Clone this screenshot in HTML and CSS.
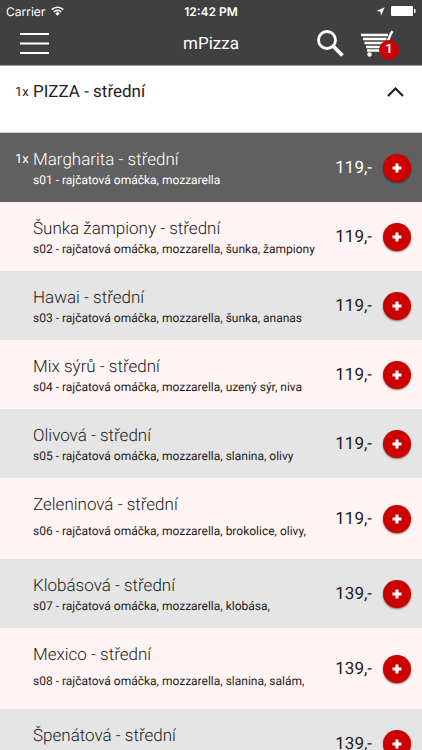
FILE: index.html
```html
<!DOCTYPE html>
<html lang="cs">
<head>
    <meta charset="UTF-8">
    <meta name="viewport" content="width=device-width, initial-scale=1.0">
    <title>mPizza</title>
    <link rel="stylesheet" href="styles.css">
</head>
<body>
    <header class="header">
        <div class="status-bar">
            <div class="carrier">
                <span>Carrier</span>
                <svg width="13" height="10" viewBox="0 0 13 10" fill="none" stroke="#fff" stroke-width="1.6">
                    <path d="M0.8 3.6a8.2 8.2 0 0 1 11.4 0M2.8 5.9a5.3 5.3 0 0 1 7.4 0"/>
                    <path d="M6.5 9.7L4.3 7.4a3.2 3.2 0 0 1 4.4 0z" fill="#fff" stroke="none"/>
                </svg>
            </div>
            <div class="time">12:42 PM</div>
            <div class="indicators">
                <svg width="9" height="9" viewBox="0 0 9 9"><path d="M8.7 0.3L5 8.7 4.4 4.6 0.3 4z" fill="#fff"/></svg>
                <svg width="25" height="10" viewBox="0 0 25 10" fill="#fff"><rect width="22" height="10" rx="1"/><path d="M23 3h1l.6 1v2L24 7h-1z"/></svg>
            </div>
        </div>
        <nav class="nav-bar">
            <button class="icon-btn menu-btn" type="button" aria-label="Menu">
                <svg width="29" height="23" viewBox="0 0 29 23" stroke="#fff" stroke-width="2"><path d="M0 2h29M0 11.500h29M0 21h29"/></svg>
            </button>
            <h1 class="title">mPizza</h1>
            <div class="nav-actions">
                <button class="icon-btn" type="button" aria-label="Hledat">
                    <svg width="27" height="27" viewBox="0 0 27 27" fill="none" stroke="#fff"><circle cx="10" cy="10" r="8.500" stroke-width="2.800"/><path d="M16 16l9.500 9.500" stroke-width="3.800"/></svg>
                </button>
                <button class="icon-btn cart-btn" type="button" aria-label="Košík">
                    <svg width="34" height="27" viewBox="0 0 34 27" fill="none" stroke="#fff">
                        <path d="M0 5h27M2 9h23.500M3.500 13h20.500M5 17h18" stroke-width="2.600"/>
                        <path d="M31.500 1.200L29.500 4.500 23 20.500H6" stroke-width="2.400"/>
                        <circle cx="8.500" cy="24.500" r="2.200" fill="#fff" stroke="none"/>
                    </svg>
                    <span class="badge">1</span>
                </button>
            </div>
        </nav>
    </header>

    <main class="menu">
        <button class="category" type="button" aria-expanded="true">
            <span class="count">1x</span>
            <span class="category-name">PIZZA - střední</span>
            <svg width="17" height="10" viewBox="0 0 17 10" fill="none" stroke="#222" stroke-width="2.200"><path d="M1 9l7.500-7.500L16 9"/></svg>
        </button>

        <ul class="items">
            <li class="item selected">
                <span class="count">1x</span>
                <div class="info">
                    <h2 class="name">Margharita - střední</h2>
                    <p class="desc">s01 - rajčatová omáčka, mozzarella</p>
                </div>
                <span class="price">119,-</span>
                <button class="add" type="button" aria-label="Přidat Margharita"></button>
            </li>
            <li class="item">
                <span class="count"></span>
                <div class="info">
                    <h2 class="name">Šunka žampiony - střední</h2>
                    <p class="desc">s02 - rajčatová omáčka, mozzarella, šunka, žampiony</p>
                </div>
                <span class="price">119,-</span>
                <button class="add" type="button" aria-label="Přidat Šunka žampiony"></button>
            </li>
            <li class="item">
                <span class="count"></span>
                <div class="info">
                    <h2 class="name">Hawai - střední</h2>
                    <p class="desc">s03 - rajčatová omáčka, mozzarella, šunka, ananas</p>
                </div>
                <span class="price">119,-</span>
                <button class="add" type="button" aria-label="Přidat Hawai"></button>
            </li>
            <li class="item">
                <span class="count"></span>
                <div class="info">
                    <h2 class="name">Mix sýrů - střední</h2>
                    <p class="desc">s04 - rajčatová omáčka, mozzarella, uzený sýr, niva</p>
                </div>
                <span class="price">119,-</span>
                <button class="add" type="button" aria-label="Přidat Mix sýrů"></button>
            </li>
            <li class="item">
                <span class="count"></span>
                <div class="info">
                    <h2 class="name">Olivová - střední</h2>
                    <p class="desc">s05 - rajčatová omáčka, mozzarella, slanina, olivy</p>
                </div>
                <span class="price">119,-</span>
                <button class="add" type="button" aria-label="Přidat Olivová"></button>
            </li>
            <li class="item tall">
                <span class="count"></span>
                <div class="info">
                    <h2 class="name">Zeleninová - střední</h2>
                    <p class="desc">s06 - rajčatová omáčka, mozzarella, brokolice, olivy,</p>
                </div>
                <span class="price">119,-</span>
                <button class="add" type="button" aria-label="Přidat Zeleninová"></button>
            </li>
            <li class="item">
                <span class="count"></span>
                <div class="info">
                    <h2 class="name">Klobásová - střední</h2>
                    <p class="desc">s07 - rajčatová omáčka, mozzarella, klobása,</p>
                </div>
                <span class="price">139,-</span>
                <button class="add" type="button" aria-label="Přidat Klobásová"></button>
            </li>
            <li class="item tall">
                <span class="count"></span>
                <div class="info">
                    <h2 class="name">Mexico - střední</h2>
                    <p class="desc">s08 - rajčatová omáčka, mozzarella, slanina, salám,</p>
                </div>
                <span class="price">139,-</span>
                <button class="add" type="button" aria-label="Přidat Mexico"></button>
            </li>
            <li class="item">
                <span class="count"></span>
                <div class="info">
                    <h2 class="name">Špenátová - střední</h2>
                </div>
                <span class="price">139,-</span>
                <button class="add" type="button" aria-label="Přidat Špenátová"></button>
            </li>
        </ul>
    </main>
</body>
</html>
```
FILE: styles.css
```css
* {
    box-sizing: border-box;
}

body {
    margin: 0;
    height: 100vh;
    display: flex;
    flex-direction: column;
    overflow: hidden;
    background: #fff;
    color: #222;
    font-family: Roboto, sans-serif;
    text-rendering: geometricPrecision;
}

h1, h2, p, ul {
    margin: 0;
    padding: 0;
    font-weight: 400;
}

button {
    border: none;
    padding: 0;
    background: none;
    color: inherit;
    font-family: inherit;
    text-rendering: inherit;
    cursor: pointer;
}

svg {
    display: block;
}

.header {
    flex: none;
    background: #404040;
    color: #fff;
    border-bottom: 1px solid #999;
}

.status-bar {
    display: grid;
    grid-template-columns: 1fr auto 1fr;
    align-items: center;
    height: 22px;
    padding: 0 6px;
    font-family: Inter, sans-serif;
    font-size: 12px;
}

.carrier,
.indicators {
    display: flex;
    align-items: center;
    gap: 6px;
}

.indicators {
    justify-content: flex-end;
}

.time {
    font-weight: 600;
}

.nav-bar {
    display: grid;
    grid-template-columns: 1fr auto 1fr;
    align-items: center;
    height: 43px;
}

.title {
    font-size: 17px;
}

.nav-actions {
    display: flex;
    justify-content: flex-end;
    gap: 17px;
    padding-right: 27px;
}

.icon-btn {
    justify-self: start;
}

.menu-btn {
    margin-left: 20px;
}

.cart-btn {
    position: relative;
}

.badge {
    position: absolute;
    right: -4px;
    bottom: -3px;
    width: 20px;
    height: 20px;
    border-radius: 50%;
    background: #c00;
    font-size: 13px;
    font-weight: 700;
    line-height: 20px;
    text-align: center;
}

.menu {
    flex: 1;
    overflow-y: auto;
    scrollbar-width: none;
}

.category {
    display: flex;
    align-items: center;
    width: 100%;
    height: 67px;
    padding: 0 18px 14px 15px;
    border-bottom: 1px solid #ccc;
    text-align: left;
}

.category-name {
    flex: 1;
    font-size: 17px;
}

.count {
    flex: none;
    width: 18px;
    font-size: 13px;
}

.items {
    list-style: none;
}

.item {
    display: flex;
    align-items: center;
    min-height: 69px;
    padding: 0 11px 0 15px;
    background: #e5e5e5;
}

.item:nth-child(even) {
    background: #fff4f4;
}

.item .count {
    align-self: flex-start;
    padding-top: 19px;
}

.info {
    flex: 1;
    align-self: flex-start;
    padding: 15px 0 12px;
}

.name {
    font-size: 17px;
    font-weight: 300;
    line-height: 25px;
}

.desc {
    font-size: 12px;
    line-height: 15px;
    white-space: nowrap;
}

.tall {
    min-height: 81px;
}

.tall .desc {
    padding-top: 6px;
}

.price {
    font-size: 17px;
    margin-right: 11px;
}

.add {
    position: relative;
    width: 28px;
    height: 28px;
    border-radius: 50%;
    background: #c00;
    box-shadow: 0 1px 2px rgba(0, 0, 0, 0.5);
}

/* plus sign */
.add::before,
.add::after {
    content: "";
    position: absolute;
    top: 50%;
    left: 50%;
    width: 9px;
    height: 3px;
    background: #fff;
    transform: translate(-50%, -50%);
}

.add::after {
    width: 3px;
    height: 9px;
}

.selected,
.selected .name {
    color: #fff;
}

.item.selected {
    background: #606060;
}
```
